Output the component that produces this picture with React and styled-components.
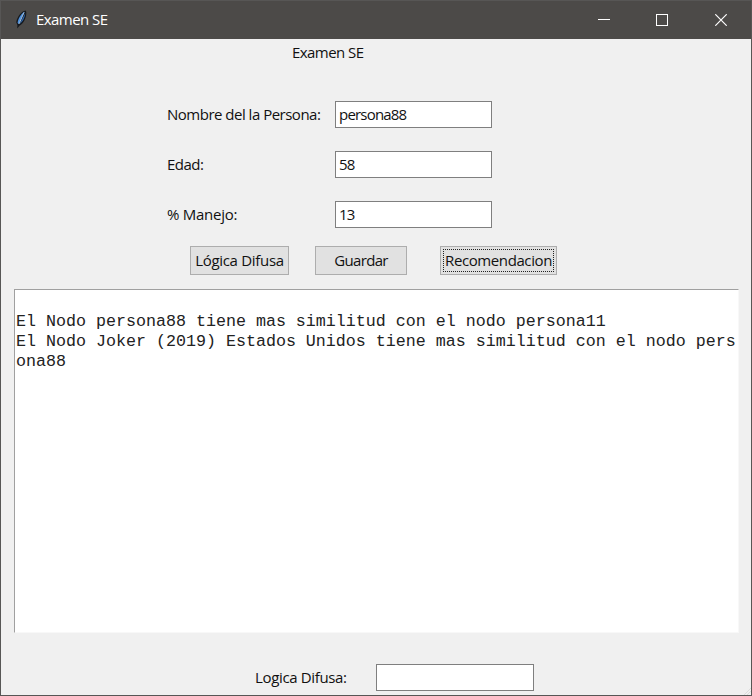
import React from "react";
import styled, { createGlobalStyle } from "styled-components";

const GlobalStyle = createGlobalStyle`
  *, *::before, *::after { box-sizing: border-box; }
  body { margin: 0; }
`;

const Window = styled.div`
  display: flex;
  flex-direction: column;
  width: 752px;
  height: 696px;
  border: 1px solid #575655;
  background: #f0f0f0;
  color: #111;
  font: 15px/20px "Open Sans", "Noto Sans", sans-serif;
  overflow: hidden;
`;

const TitleBar = styled.header`
  display: flex;
  flex: none;
  align-items: center;
  height: 38px;
  padding-left: 12px;
  background: #4c4a48;
  color: #fff;
`;

const Text = styled.span`
  display: inline-block;
  padding-bottom: 2px;
  font-size: 15px;
  letter-spacing: ${(p) => p.$track ?? -0.55}px;
  white-space: pre;
`;

const WindowTitle = styled(Text)`
  margin-left: 7px;
`;

const Controls = styled.div`
  display: flex;
  margin-left: auto;
  margin-right: 1px;
`;

const Control = styled.button`
  display: flex;
  align-items: center;
  justify-content: center;
  width: 58.5px;
  height: 38px;
  padding: 0;
  border: 0;
  background: transparent;
  color: #fff;
`;

const Heading = styled.div`
  flex: none;
  height: 62px;
  padding: 3px 0 0 291px;
`;

const Form = styled.div`
  display: grid;
  flex: none;
  grid-template-columns: 168px 158px;
  grid-auto-rows: 27px;
  row-gap: 23px;
  align-items: center;
  margin-left: 166px;
`;

const Entry = styled.input`
  width: ${(p) => p.$width || 157}px;
  height: 27px;
  margin: 0;
  padding: 0 0 2px 3px;
  border: 1px solid #7f7f7f;
  border-radius: 0;
  background: #fff;
  color: #111;
  font: 15px/20px "Open Sans", "Noto Sans", sans-serif;
  letter-spacing: ${(p) => p.$track || 0}px;
  outline: 0;
`;

const ButtonRow = styled.div`
  display: flex;
  flex: none;
  margin: 18px 0 0 189px;
`;

const PushButton = styled.button`
  display: flex;
  align-items: center;
  justify-content: center;
  width: ${(p) => p.$width}px;
  height: 29px;
  margin-right: ${(p) => p.$gap || 0}px;
  padding: 0;
  border: 1px solid #adadad;
  background: #e1e1e1;
  color: #111;
  font: inherit;
  outline: ${(p) => (p.$focused ? "1px dotted #222" : "0")};
  outline-offset: -4px;
`;

const Output = styled.pre`
  flex: none;
  width: 725px;
  height: 344px;
  margin: 14px 0 0 13px;
  padding: 22px 0 0 1px;
  border-top: 1px solid #a0a0a0;
  border-left: 1px solid #a0a0a0;
  border-right: 1px solid #f8f8f8;
  border-bottom: 1px solid #f8f8f8;
  background: #fff;
  color: #222;
  font: 16.664px/20px "Liberation Mono", "Courier New", monospace;
`;

const Footer = styled.div`
  display: flex;
  flex: none;
  align-items: center;
  margin: 31px 0 0 254px;
`;

const FooterLabel = styled(Text)`
  width: 121px;
`;

const Grip = styled.svg`
  align-self: flex-end;
  margin-left: auto;
  margin-bottom: -4px;
`;

const Feather = () => (
  <svg width="16" height="20" viewBox="0 0 16 20">
    <path d="M12.6.4C8.5 1 4.2 6.4 3.2 12.3L4.4 15l-.2 3.6 2.3-2.8C10.6 13.6 13.6 7.5 13.3 2z" fill="#16191d" />
    <path d="M11.6 1.8C8 3.8 5 8.5 4.6 13.1L5.7 14 11.6 1.8z" fill="#4e8fda" />
    <path d="M12.2 3.2c-.1 4.1-2.5 8.5-5.5 10.5z" fill="#2c65ad" />
    <path d="M11.1 2.3 6 14" stroke="#b9d5f2" strokeWidth=".8" />
  </svg>
);

const output = `El Nodo persona88 tiene mas similitud con el nodo persona11
El Nodo Joker (2019) Estados Unidos tiene mas similitud con el nodo pers
ona88`;

export default function App() {
  return (
    <>
      <GlobalStyle />
      <Window>
        <TitleBar>
          <Feather />
          <WindowTitle>Examen SE</WindowTitle>
          <Controls>
            <Control aria-label="Minimizar">
              <svg width="12" height="12"><path d="M0 5.5h12" stroke="currentColor" /></svg>
            </Control>
            <Control aria-label="Maximizar">
              <svg width="12" height="12"><rect x=".5" y=".5" width="11" height="11" fill="none" stroke="currentColor" /></svg>
            </Control>
            <Control aria-label="Cerrar">
              <svg width="12" height="12"><path d="m.3.3 11.4 11.4M11.7.3.3 11.7" stroke="currentColor" strokeWidth="1.2" /></svg>
            </Control>
          </Controls>
        </TitleBar>
        <Heading><Text>Examen SE</Text></Heading>
        <Form>
          <Text $track={-0.5}>Nombre del la Persona:</Text>
          <Entry defaultValue="persona88" $track={-0.8} />
          <Text $track={-0.5}>Edad:</Text>
          <Entry defaultValue="58" $track={-0.9} />
          <Text $track={-0.25}>% Manejo:</Text>
          <Entry defaultValue="13" $track={-0.9} />
        </Form>
        <ButtonRow>
          <PushButton $width={99} $gap={26}><Text $track={-0.3}>Lógica Difusa</Text></PushButton>
          <PushButton $width={92} $gap={33}><Text $track={-0.65}>Guardar</Text></PushButton>
          <PushButton $width={117} $focused><Text $track={-0.4}>Recomendacion</Text></PushButton>
        </ButtonRow>
        <Output>{output}</Output>
        <Footer>
          <FooterLabel $track={-0.35}>Logica Difusa:</FooterLabel>
          <Entry aria-label="Logica Difusa" $width={158} />
          <Grip width="8" height="8">
            <path d="M1 8 8 1M4 8l4-4" stroke="#dcdcdc" />
          </Grip>
        </Footer>
      </Window>
    </>
  );
}
